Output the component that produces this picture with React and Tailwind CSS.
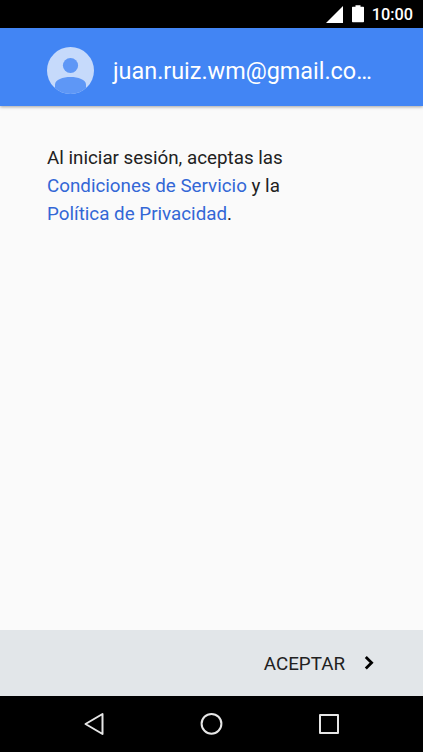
function StatusBar() {
  return (
    <div className="h-7 shrink-0 bg-black flex items-center justify-end pr-2.5 text-white">
      <svg width="17" height="17" viewBox="0 0 17 17" className="mr-[9px]" fill="#fff">
        <path d="M17 0v17H0z" />
      </svg>
      <svg width="12" height="18" viewBox="0 0 12 18" className="mr-2" fill="#fff">
        <path d="M3.500 .3h5v1.500H11.300a.7.7 0 0 1 .7.700v14a.7.7 0 0 1-.7.700H.7a.7.7 0 0 1-.7-.7v-14a.7.7 0 0 1 .7-.7h2.800z" />
      </svg>
      <span className="text-[16.3px] leading-none font-medium pt-[3px]">10:00</span>
    </div>
  );
}

function Avatar() {
  return (
    <svg width="47" height="47" viewBox="0 0 47 47" className="shrink-0">
      <defs>
        <clipPath id="avatar">
          <circle cx="23.5" cy="23.5" r="23.5" />
        </clipPath>
      </defs>
      <g clipPath="url(#avatar)">
        <rect width="47" height="47" fill="#c6dafb" />
        <circle cx="23.5" cy="18.5" r="7.600" fill="#5e97f6" />
        <path d="M8 47v-9.500c0-5 8-7.500 15.500-7.500S39 32.500 39 37.500V47z" fill="#5e97f6" />
      </g>
    </svg>
  );
}

function Header({ email }) {
  return (
    <header className="h-[77.5px] shrink-0 bg-[#4285f4] flex items-center pl-[47px] pr-12 pt-[7px] shadow-[0_1px_3px_rgba(0,0,0,0.35)]">
      <Avatar />
      <h1 className="ml-[19px] pt-0.5 text-[23.4px] leading-7 text-white whitespace-nowrap">{email}</h1>
    </header>
  );
}

function NavBar() {
  return (
    <nav className="h-14 shrink-0 bg-black flex items-center justify-between pl-[84px] pr-[83px]">
      <svg width="20" height="24" viewBox="0 0 20 24" fill="none" stroke="#e6e6e6" strokeWidth="2" strokeLinejoin="round">
        <path d="M18.500 2v20L1.500 12z" />
      </svg>
      <svg width="24" height="24" viewBox="0 0 24 24" fill="none" stroke="#e6e6e6" strokeWidth="2">
        <circle cx="12.500" cy="11.800" r="9.900" />
      </svg>
      <svg width="22" height="22" viewBox="0 0 22 22" fill="none" stroke="#e6e6e6" strokeWidth="2" strokeLinejoin="round">
        <rect x="2" y="2" width="18" height="18" />
      </svg>
    </nav>
  );
}

export default function App() {
  return (
    <div className="w-full h-screen flex flex-col overflow-hidden bg-[#fafafa] font-[Roboto,'Liberation_Sans',sans-serif]">
      <StatusBar />
      <Header email="juan.ruiz.wm@gmail.co…" />

      <main className="flex-1 px-[47px] pt-[38.5px]">
        <p className="text-[18.8px] leading-[28px] text-[#212121]">
          Al iniciar sesión, aceptas las
          <br />
          <a className="text-[#3367d6]">Condiciones de Servicio</a> y la
          <br />
          <a className="text-[#3367d6]">Política de Privacidad</a>.
        </p>
      </main>

      <footer className="h-[66px] shrink-0 bg-[#e2e6e9] flex items-center justify-end pr-12">
        <button className="flex items-center text-[18.8px] text-[#212121]">
          <span className="pt-[3px]">ACEPTAR</span>
          <svg width="11" height="14" viewBox="0 0 11 14" className="ml-[19px]" fill="none" stroke="#000" strokeWidth="2.800">
            <path d="M1.800 1l5.800 5.800-5.800 5.800" />
          </svg>
        </button>
      </footer>

      <NavBar />
    </div>
  );
}
